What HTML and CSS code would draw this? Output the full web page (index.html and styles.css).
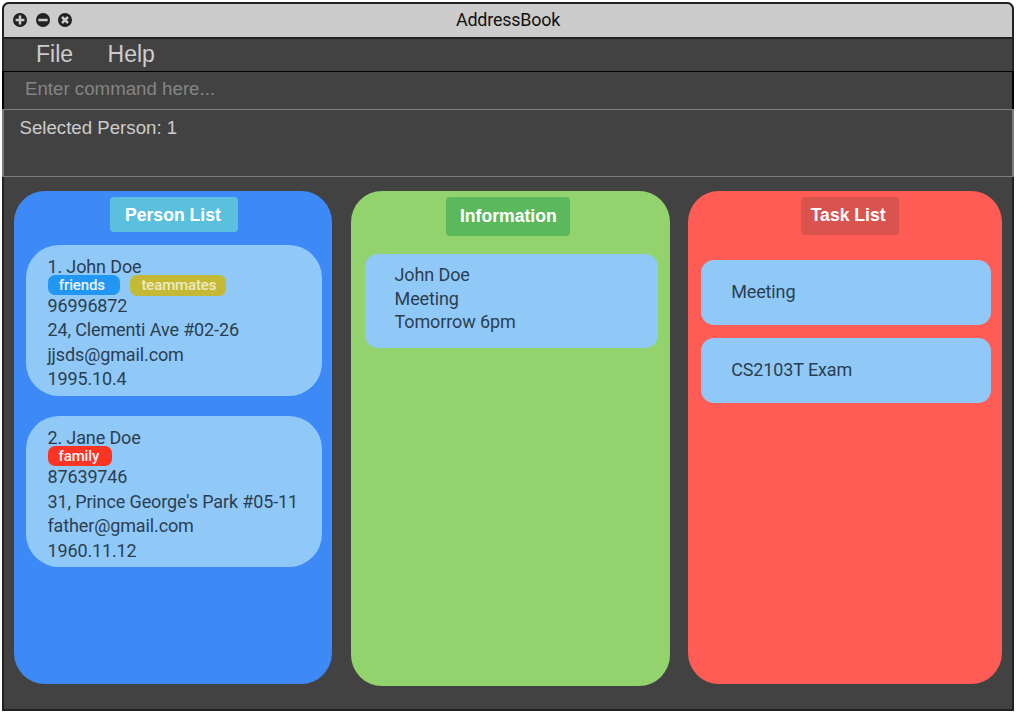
FILE: index.html
```html
<!DOCTYPE html>
<html lang="en">
<head>
<meta charset="utf-8">
<title>AddressBook</title>
<link rel="stylesheet" href="styles.css">
</head>
<body>
<div class="window">
  <header class="titlebar">
    <div class="controls">
      <svg class="control" viewBox="0 0 14 14"><circle cx="7" cy="7" r="7"/><path d="M7 2.6v8.8M2.6 7h8.8"/></svg>
      <svg class="control" viewBox="0 0 14 14"><circle cx="7" cy="7" r="7"/><path d="M2.4 7h9.2"/></svg>
      <svg class="control" viewBox="0 0 14 14"><circle cx="7" cy="7" r="7"/><path d="M4 4l6 6M10 4l-6 6"/></svg>
    </div>
    <div class="title">AddressBook</div>
  </header>
  <nav class="menu"><span>File</span><span>Help</span></nav>
  <div class="command">Enter command here...</div>
  <div class="result">Selected Person: 1</div>
  <main class="board">
    <section class="column people">
      <h2 class="heading">Person List</h2>
      <article class="card person">
        <div class="line">1. John Doe</div>
        <div class="tags"><span class="tag friends">friends</span><span class="tag teammates">teammates</span></div>
        <div class="line">96996872</div>
        <div class="line">24, Clementi Ave #02-26</div>
        <div class="line">jjsds@gmail.com</div>
        <div class="line">1995.10.4</div>
      </article>
      <article class="card person">
        <div class="line">2. Jane Doe</div>
        <div class="tags"><span class="tag family">family</span></div>
        <div class="line">87639746</div>
        <div class="line">31, Prince George's Park #05-11</div>
        <div class="line">father@gmail.com</div>
        <div class="line">1960.11.12</div>
      </article>
    </section>
    <section class="column info">
      <h2 class="heading">Information</h2>
      <article class="card details">
        <div class="line name">John Doe</div>
        <div class="line">Meeting</div>
        <div class="line">Tomorrow 6pm</div>
      </article>
    </section>
    <section class="column tasks">
      <h2 class="heading">Task List</h2>
      <article class="card task">Meeting</article>
      <article class="card task">CS2103T Exam</article>
    </section>
  </main>
</div>
</body>
</html>
```
FILE: styles.css
```css
* { box-sizing: border-box; }
body {
  margin: 0;
  padding: 2px;
  height: 713px;
  overflow: hidden;
  background: #fff;
  font-family: "Liberation Sans", Arial, sans-serif;
}
.window {
  display: flex;
  flex-direction: column;
  width: 1012px;
  height: 709px;
  background: #424242;
  border-radius: 7px 7px 0 0;
}
.titlebar {
  display: grid;
  grid-template-columns: 1fr auto 1fr;
  align-items: center;
  height: 37px;
  padding: 0 9px 2px 9px;
  background: #ccc;
  border: 2px solid #222;
  border-radius: 7px 7px 0 0;
}
.controls { display: flex; gap: 8.5px; }
.control { width: 14px; height: 14px; }
.control circle { fill: #222; }
.control path { fill: none; stroke: #ccc; stroke-width: 2.5; }
.title {
  font: 17.9px/20px Roboto, sans-serif;
  letter-spacing: -0.2px;
  color: #111;
}
.menu {
  display: flex;
  gap: 34.5px;
  height: 32px;
  padding-left: 32px;
  border: solid #222;
  border-width: 0 2px;
  color: #ccc;
  font-size: 23px;
  line-height: 30px;
}
.command {
  height: 38px;
  padding: 5px 21px;
  border: solid #000;
  border-width: 1px 2px 0;
  color: #858585;
  font-size: 18.7px;
  line-height: 23px;
}
.result {
  height: 68px;
  padding: 6px 15.5px;
  border: solid #7d7d7d;
  border-width: 1px 2px;
  color: #ccc;
  font-size: 18.67px;
  line-height: 23px;
}
.board {
  display: flex;
  gap: 18.5px;
  flex: 1;
  align-items: flex-start;
  padding: 13.5px 0 0 9.5px;
  border: 2px solid #222;
  border-top: 0;
}
.column {
  display: flex;
  flex-direction: column;
  align-items: center;
  height: 493.8px;
  padding-top: 6.5px;
  border-radius: 31px;
}
.people { width: 318.8px; background: #3d8af7; }
.info { width: 319px; height: 495px; background: #92d36e; }
.tasks { width: 313.7px; background: #ff5c56; }
.heading {
  margin: 0;
  color: #fff;
  font-size: 17.6px;
  font-weight: bold;
  line-height: 36px;
  text-align: center;
  border-radius: 4px;
}
.people .heading { width: 128px; height: 35px; margin: 0 0 12.5px 3px; padding-right: 3px; background: #5bc0de; }
.info .heading { width: 124px; height: 39px; margin: 0 5px 18px 0; padding-left: 1px; line-height: 38px; background: #5cb85c; }
.tasks .heading { width: 98px; height: 38px; margin: 0 0 24.5px 9px; padding-right: 3px; background: #d9534f; }
.card {
  background: #90c9f8;
  color: #2b3e50;
  font: 18px/24.5px Roboto, sans-serif;
  letter-spacing: -0.12px;
}
.line { white-space: nowrap; }
.person {
  width: 296px;
  height: 151px;
  margin: 0 0 20.5px 2px;
  padding: 10.2px 0 0 21.5px;
  border-radius: 33px;
}
.tags { display: flex; gap: 10px; height: 14.7px; padding-left: 0.5px; }
.tag {
  height: 20px;
  margin-top: -4.5px;
  border-radius: 7px;
  color: #eef3f4;
  font-size: 15px;
  font-weight: 500;
  line-height: 20px;
  text-align: center;
}
.friends { width: 72px; padding-right: 4px; background: #2196f3; }
.teammates { width: 96px; height: 21px; padding-left: 2px; background: #c3b934; color: #eee9c5; }
.family { width: 64px; padding-right: 2px; background: #fc3424; }
.details {
  width: 293.5px;
  height: 94px;
  margin-left: 2px;
  padding: 8px 0 0 30px;
  border-radius: 13px;
  line-height: 22.5px;
}
.details .name { line-height: 25px; margin-bottom: 1.3px; }
.task {
  width: 290px;
  height: 65px;
  margin: 0 0 13.5px 1px;
  padding-left: 30.5px;
  border-radius: 13px;
  line-height: 64px;
}
```
